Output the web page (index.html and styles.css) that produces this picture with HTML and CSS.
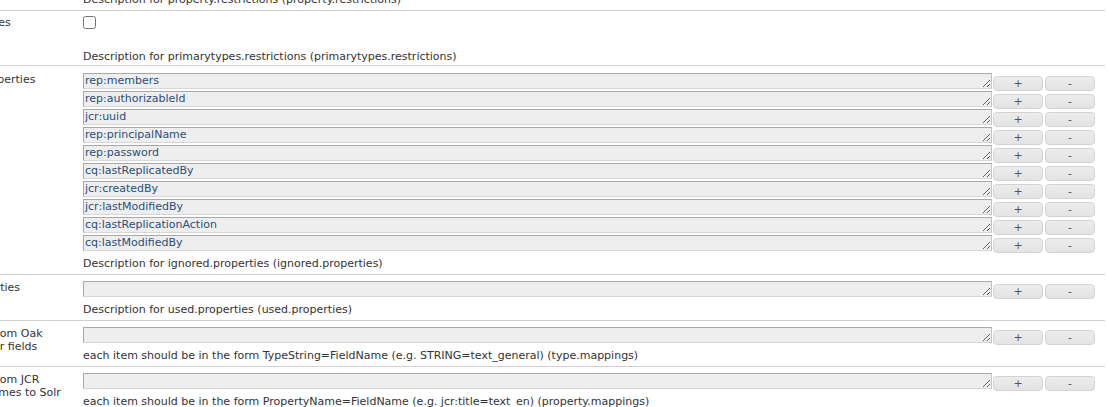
FILE: index.html
```html
<!DOCTYPE html>
<html>
<head>
<meta charset="utf-8">
<link rel="stylesheet" href="styles.css">
</head>
<body>
<div class="form">
  <div class="row">
    <div class="label">property restrictions</div>
    <div class="value">
      <div class="entry"><textarea class="field" rows="1"></textarea><button class="btn">+</button><button class="btn">-</button></div>
      <div class="desc">Description for property.restrictions (property.restrictions)</div>
    </div>
  </div>
  <div class="row row-check">
    <div class="label">primary types restrictions</div>
    <div class="value">
      <div class="check-line"><input type="checkbox" class="check"></div>
      <div class="desc desc-check">Description for primarytypes.restrictions (primarytypes.restrictions)</div>
    </div>
  </div>
  <div class="row row-multi">
    <div class="label">ignored properties</div>
    <div class="value">
      <div class="entry"><textarea class="field" rows="1">rep:members</textarea><button class="btn">+</button><button class="btn">-</button></div>
      <div class="entry"><textarea class="field" rows="1">rep:authorizableId</textarea><button class="btn">+</button><button class="btn">-</button></div>
      <div class="entry"><textarea class="field" rows="1">jcr:uuid</textarea><button class="btn">+</button><button class="btn">-</button></div>
      <div class="entry"><textarea class="field" rows="1">rep:principalName</textarea><button class="btn">+</button><button class="btn">-</button></div>
      <div class="entry"><textarea class="field" rows="1">rep:password</textarea><button class="btn">+</button><button class="btn">-</button></div>
      <div class="entry"><textarea class="field" rows="1">cq:lastReplicatedBy</textarea><button class="btn">+</button><button class="btn">-</button></div>
      <div class="entry"><textarea class="field" rows="1">jcr:createdBy</textarea><button class="btn">+</button><button class="btn">-</button></div>
      <div class="entry"><textarea class="field" rows="1">jcr:lastModifiedBy</textarea><button class="btn">+</button><button class="btn">-</button></div>
      <div class="entry"><textarea class="field" rows="1">cq:lastReplicationAction</textarea><button class="btn">+</button><button class="btn">-</button></div>
      <div class="entry"><textarea class="field" rows="1">cq:lastModifiedBy</textarea><button class="btn">+</button><button class="btn">-</button></div>
      <div class="desc">Description for ignored.properties (ignored.properties)</div>
    </div>
  </div>
  <div class="row">
    <div class="label">used properties</div>
    <div class="value">
      <div class="entry"><textarea class="field" rows="1"></textarea><button class="btn">+</button><button class="btn">-</button></div>
      <div class="desc">Description for used.properties (used.properties)</div>
    </div>
  </div>
  <div class="row">
    <div class="label">mappings from Oak Types to Solr fields</div>
    <div class="value">
      <div class="entry"><textarea class="field" rows="1"></textarea><button class="btn">+</button><button class="btn">-</button></div>
      <div class="desc">each item should be in the form TypeString=FieldName (e.g. STRING=text_general) (type.mappings)</div>
    </div>
  </div>
  <div class="row">
    <div class="label">mappings from JCR property names to Solr fields</div>
    <div class="value">
      <div class="entry"><textarea class="field" rows="1"></textarea><button class="btn">+</button><button class="btn">-</button></div>
      <div class="desc">each item should be in the form PropertyName=FieldName (e.g. jcr:title=text_en) (property.mappings)</div>
    </div>
  </div>
</div>
</body>
</html>
```
FILE: styles.css
```css
html, body {
  margin: 0;
  padding: 0;
  background: #ffffff;
  overflow: hidden;
}
body {
  font-family: "DejaVu Sans", Verdana, sans-serif;
  font-size: 11px;
  line-height: 13px;
  color: #333333;
}
.form {
  margin-top: -36px;
  margin-left: -70px;
  width: 1175px;
}
.row {
  display: flex;
  border-top: 1px solid #d0d0d0;
  padding-top: 6px;
  padding-bottom: 4px;
}
.row-check {
  padding-top: 5px;
  padding-bottom: 2px;
}
.row-multi {
  padding-top: 7px;
}
.label {
  flex: none;
  width: 135px;
  padding-left: 4px;
  padding-right: 14px;
  color: #333333;
}
.value {
  flex: 1;
  min-width: 0;
  padding-right: 10px;
}
.entry {
  display: flex;
  align-items: flex-start;
  height: 18px;
}
.field {
  flex: 1;
  min-width: 0;
  box-sizing: border-box;
  height: 16px;
  margin: 0;
  padding: 0 1px;
  border: 1px solid #a8a8a8;
  border-bottom-color: #d6d6d6;
  border-right-color: #c4c4c4;
  background: #eeeeee;
  color: #2a4f7a;
  font-family: "DejaVu Sans", Verdana, sans-serif;
  font-size: 11px;
  line-height: 13px;
  overflow: hidden;
  resize: both;
  white-space: nowrap;
}
.btn {
  flex: none;
  box-sizing: border-box;
  width: 50px;
  height: 15px;
  margin: 3px 0 0 1px;
  padding: 0;
  border: 1px solid #d3d3d3;
  border-radius: 4px;
  background: linear-gradient(#ececec, #e3e3e3);
  color: #555555;
  font-family: "DejaVu Sans", Verdana, sans-serif;
  font-size: 11px;
  line-height: 13px;
}
.btn + .btn {
  margin-left: 2px;
}
.check-line {
  height: 13px;
}
.check {
  display: block;
  width: 13px;
  height: 13px;
  margin: 0;
}
.desc {
  margin-top: 4px;
  color: #333333;
  white-space: nowrap;
}
.desc-check {
  margin-top: 21px;
}
```
